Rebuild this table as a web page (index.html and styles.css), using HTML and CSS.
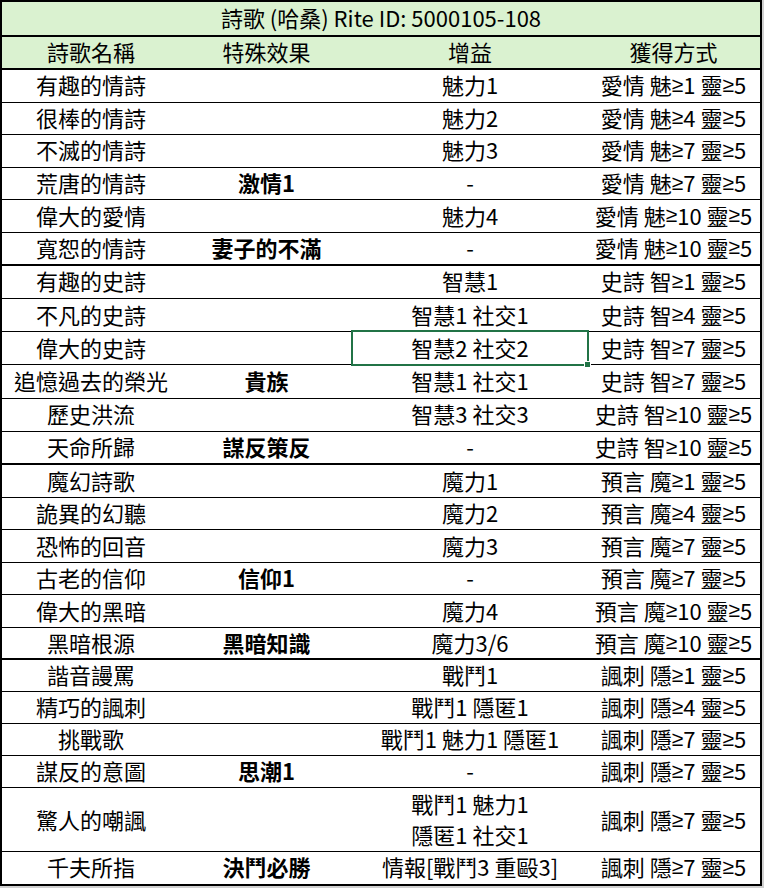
FILE: index.html
```html
<!DOCTYPE html>
<html lang="zh-Hant">
<head>
<meta charset="utf-8">
<title>詩歌 (哈桑) Rite ID: 5000105-108</title>
<link rel="stylesheet" href="styles.css">
</head>
<body>
<div class="sheet">
  <div class="title">詩歌 (哈桑) Rite ID: 5000105-108</div>
  <div class="row head"><div>詩歌名稱</div><div>特殊效果</div><div>增益</div><div>獲得方式</div></div>

  <div class="sec sec1">
    <div class="row"><div>有趣的情詩</div><div class="fx"></div><div>魅力1</div><div>愛情 魅<span class="ge">≥</span>1 靈<span class="ge">≥</span>5</div></div>
    <div class="row"><div>很棒的情詩</div><div class="fx"></div><div>魅力2</div><div>愛情 魅<span class="ge">≥</span>4 靈<span class="ge">≥</span>5</div></div>
    <div class="row"><div>不滅的情詩</div><div class="fx"></div><div>魅力3</div><div>愛情 魅<span class="ge">≥</span>7 靈<span class="ge">≥</span>5</div></div>
    <div class="row"><div>荒唐的情詩</div><div class="fx">激情1</div><div>-</div><div>愛情 魅<span class="ge">≥</span>7 靈<span class="ge">≥</span>5</div></div>
    <div class="row"><div>偉大的愛情</div><div class="fx"></div><div>魅力4</div><div>愛情 魅<span class="ge">≥</span>10 靈<span class="ge">≥</span>5</div></div>
    <div class="row"><div>寬恕的情詩</div><div class="fx">妻子的不滿</div><div>-</div><div>愛情 魅<span class="ge">≥</span>10 靈<span class="ge">≥</span>5</div></div>
  </div>

  <div class="sec sec2">
    <div class="row"><div>有趣的史詩</div><div class="fx"></div><div>智慧1</div><div>史詩 智<span class="ge">≥</span>1 靈<span class="ge">≥</span>5</div></div>
    <div class="row"><div>不凡的史詩</div><div class="fx"></div><div>智慧1 社交1</div><div>史詩 智<span class="ge">≥</span>4 靈<span class="ge">≥</span>5</div></div>
    <div class="row"><div>偉大的史詩</div><div class="fx"></div><div class="selected">智慧2 社交2<span class="handle"></span></div><div>史詩 智<span class="ge">≥</span>7 靈<span class="ge">≥</span>5</div></div>
    <div class="row"><div>追憶過去的榮光</div><div class="fx">貴族</div><div>智慧1 社交1</div><div>史詩 智<span class="ge">≥</span>7 靈<span class="ge">≥</span>5</div></div>
    <div class="row"><div>歷史洪流</div><div class="fx"></div><div>智慧3 社交3</div><div>史詩 智<span class="ge">≥</span>10 靈<span class="ge">≥</span>5</div></div>
    <div class="row"><div>天命所歸</div><div class="fx">謀反策反</div><div>-</div><div>史詩 智<span class="ge">≥</span>10 靈<span class="ge">≥</span>5</div></div>
  </div>

  <div class="sec sec3">
    <div class="row"><div>魔幻詩歌</div><div class="fx"></div><div>魔力1</div><div>預言 魔<span class="ge">≥</span>1 靈<span class="ge">≥</span>5</div></div>
    <div class="row"><div>詭異的幻聽</div><div class="fx"></div><div>魔力2</div><div>預言 魔<span class="ge">≥</span>4 靈<span class="ge">≥</span>5</div></div>
    <div class="row"><div>恐怖的回音</div><div class="fx"></div><div>魔力3</div><div>預言 魔<span class="ge">≥</span>7 靈<span class="ge">≥</span>5</div></div>
    <div class="row"><div>古老的信仰</div><div class="fx">信仰1</div><div>-</div><div>預言 魔<span class="ge">≥</span>7 靈<span class="ge">≥</span>5</div></div>
    <div class="row"><div>偉大的黑暗</div><div class="fx"></div><div>魔力4</div><div>預言 魔<span class="ge">≥</span>10 靈<span class="ge">≥</span>5</div></div>
    <div class="row"><div>黑暗根源</div><div class="fx">黑暗知識</div><div>魔力3/6</div><div>預言 魔<span class="ge">≥</span>10 靈<span class="ge">≥</span>5</div></div>
  </div>

  <div class="sec sec4">
    <div class="row"><div>諧音謾罵</div><div class="fx"></div><div>戰鬥1</div><div>諷刺 隱<span class="ge">≥</span>1 靈<span class="ge">≥</span>5</div></div>
    <div class="row"><div>精巧的諷刺</div><div class="fx"></div><div>戰鬥1 隱匿1</div><div>諷刺 隱<span class="ge">≥</span>4 靈<span class="ge">≥</span>5</div></div>
    <div class="row"><div>挑戰歌</div><div class="fx"></div><div>戰鬥1 魅力1 隱匿1</div><div>諷刺 隱<span class="ge">≥</span>7 靈<span class="ge">≥</span>5</div></div>
    <div class="row"><div>謀反的意圖</div><div class="fx">思潮1</div><div>-</div><div>諷刺 隱<span class="ge">≥</span>7 靈<span class="ge">≥</span>5</div></div>
    <div class="row tall"><div>驚人的嘲諷</div><div class="fx"></div><div class="two">戰鬥1 魅力1<br>隱匿1 社交1</div><div>諷刺 隱<span class="ge">≥</span>7 靈<span class="ge">≥</span>5</div></div>
    <div class="row"><div>千夫所指</div><div class="fx">決鬥必勝</div><div>情報[戰鬥3 重毆3]</div><div>諷刺 隱<span class="ge">≥</span>7 靈<span class="ge">≥</span>5</div></div>
  </div>
</div>
</body>
</html>
```

FILE: styles.css
```css
html, body {
  margin: 0;
  padding: 0;
}
body {
  background: #d0d0d0;
  width: 764px;
  height: 888px;
  overflow: hidden;
  font-family: "Noto Sans CJK TC", sans-serif;
  font-size: 22px;
  color: #000;
}
.sheet {
  width: 762px;
  box-sizing: border-box;
  border: 2px solid #000;
  background: #fff;
}
.title {
  height: 35px;
  box-sizing: border-box;
  padding-bottom: 3px;
  border-bottom: 2px solid #000;
  background: #daf2d0;
  display: flex;
  align-items: center;
  justify-content: center;
  line-height: 1;
}
.row {
  display: grid;
  grid-template-columns: 178px 173px 234px 173px;
  height: 32.6px;
  box-sizing: border-box;
  border-bottom: 1px solid #000;
}
.row > div {
  display: flex;
  align-items: center;
  justify-content: center;
  white-space: nowrap;
  line-height: 1;
  padding-bottom: 3px;
}
.ge {
  font-family: "Liberation Sans", sans-serif;
  font-size: 21px;
}
.row.head {
  height: 33px;
  border-bottom: 2px solid #000;
  background: #daf2d0;
}
.sec .row:last-child {
  border-bottom: 2px solid #000;
}
.sec:last-child .row:last-child {
  border-bottom: none;
}
.sec2 .row {
  height: 33.3px;
}
.sec3 .row {
  height: 32.5px;
}
.sec4 .row {
  height: 31.94px;
}
.sec4 .row.tall {
  height: 63.88px;
}
.row > .fx {
  font-weight: bold;
}
.row > .two {
  line-height: 31px;
  text-align: center;
}
.row > .selected {
  position: relative;
  outline: 2px solid #217346;
  outline-offset: 0px;
}
.handle {
  position: absolute;
  right: -4px;
  bottom: -4px;
  width: 5px;
  height: 5px;
  background: #217346;
  border: 1px solid #fff;
}
```
